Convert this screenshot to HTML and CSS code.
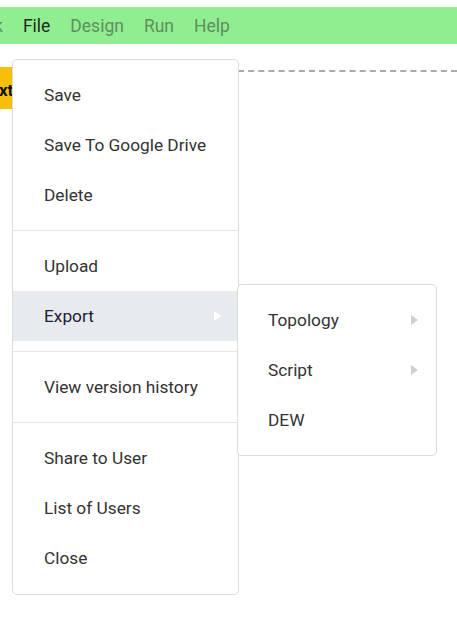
FILE: index.html
```html
<!DOCTYPE html>
<html>
<head>
<meta charset="utf-8">
<link rel="stylesheet" href="styles.css">
</head>
<body>
<div class="topgap"></div>
<nav class="menubar">
  <span class="mb-item cut">k</span>
  <span class="mb-item active">File</span>
  <span class="mb-item">Design</span>
  <span class="mb-item">Run</span>
  <span class="mb-item">Help</span>
</nav>
<main class="canvas">
  <div class="tab">Text</div>
  <div class="dashed"></div>
</main>
<div class="menu main-menu">
  <div class="item">Save</div>
  <div class="item">Save To Google Drive</div>
  <div class="item">Delete</div>
  <div class="divider"></div>
  <div class="item">Upload</div>
  <div class="item hover">Export<span class="arrow white"></span></div>
  <div class="divider"></div>
  <div class="item">View version history</div>
  <div class="divider"></div>
  <div class="item">Share to User</div>
  <div class="item">List of Users</div>
  <div class="item">Close</div>
</div>
<div class="menu sub-menu">
  <div class="item">Topology<span class="arrow"></span></div>
  <div class="item">Script<span class="arrow"></span></div>
  <div class="item">DEW</div>
</div>
</body>
</html>
```
FILE: styles.css
```css
html, body {
  margin: 0;
  padding: 0;
  background: #fff;
  font-family: Roboto, "Liberation Sans", sans-serif;
  width: 457px;
  height: 630px;
  overflow: hidden;
  position: relative;
}
.topgap { height: 7px; }
.menubar {
  height: 37px;
  background: #90ee90;
  display: flex;
  align-items: center;
  font-size: 17.5px;
  color: #5e8f5e;
}
.mb-item { margin-right: 20px; white-space: nowrap; }
.mb-item.cut { margin-left: -6px; margin-right: 20px; }
.mb-item.active { color: #1f2a1f; }
.canvas { position: relative; height: 586px; }
.tab {
  position: absolute;
  left: -20px;
  top: 23px;
  width: 32px;
  height: 42px;
  background: #f6bf0a;
  font-weight: bold;
  font-size: 17px;
  line-height: 46px;
  color: #111;
  text-align: right;
  overflow: hidden;
}
.dashed {
  position: absolute;
  left: 238px;
  right: 0;
  top: 26px;
  border-top: 2px dashed #aaa;
}
.menu {
  position: absolute;
  background: #fff;
  border: 1px solid #dcdcdc;
  border-radius: 5px;
  padding: 10px 0;
  font-size: 17.3px;
  color: #333;
  box-sizing: border-box;
}
.main-menu {
  left: 12px;
  top: 59px;
  width: 227px;
  height: 536px;
}
.sub-menu {
  left: 237px;
  top: 284px;
  width: 200px;
  height: 172px;
}
.item {
  height: 50px;
  display: flex;
  align-items: center;
  padding-left: 31px;
  position: relative;
}
.sub-menu .item { padding-left: 30px; }
.item.hover {
  background: #e8ebee;
  color: #1c2036;
}
.divider {
  height: 1px;
  background: #e6e6e6;
  margin: 10px 0;
}
.arrow {
  position: absolute;
  right: 18px;
  top: 20px;
  width: 0;
  height: 0;
  border-top: 5px solid transparent;
  border-bottom: 5px solid transparent;
  border-left: 7px solid #cfcfcf;
}
.arrow.white { border-left-color: #fff; right: 17px; }
```
